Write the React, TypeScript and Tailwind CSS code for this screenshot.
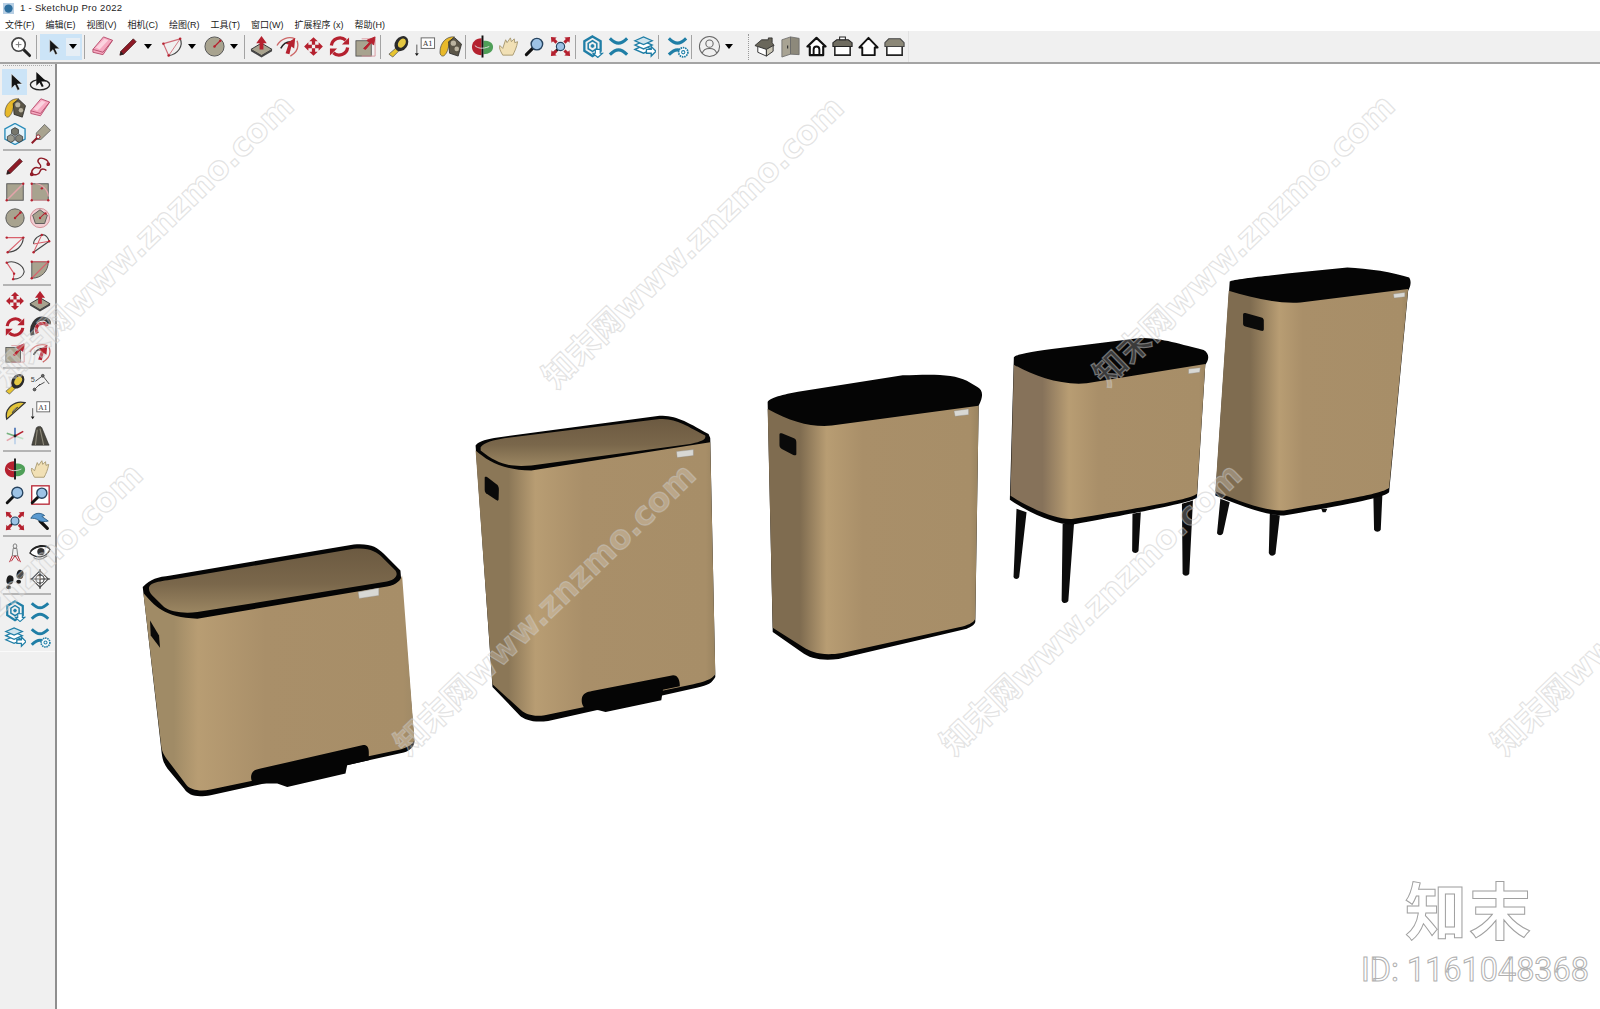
import React from "react";

const R = "#b5212f";
const DR = "#8e1a26";
const B = "#1f7ea6";
const FACE = "#a8a38f";

const dot = (x: number, y: number, k?: number) => <circle key={`${x}-${y}-${k ?? 0}`} cx={x} cy={y} r={1.3} fill={R} />;
const arrows4 = (
  <g fill={R} transform="translate(1.800 1.800) scale(.85)">
    <path d="M12 .5l5.200 5.200h-3.200v4.300h-4V5.700H6.800zM12 23.500l5.200-5.200h-3.200V14h-4v4.300H6.800zM.5 12l5.200-5.200v3.200H10v4H5.700v3.200zM23.500 12l-5.200-5.200v3.200H14v4h4.300v3.200z" />
  </g>
);
const lens = (x = 14.5, y = 9.5, r = 6, fill = "#9dc3e6") => (
  <g>
    <path d={`M${x - r * 0.7} ${y + r * 0.7}L3.500 20.500`} stroke="#111" strokeWidth="3.200" strokeLinecap="round" />
    <circle cx={x} cy={y} r={r} fill={fill} stroke="#26435f" strokeWidth="1.500" />
  </g>
);
const chevrons = (
  <g fill="none" stroke={B} strokeWidth="3.200">
    <path d="M3 3.500C7 7.500 9 8.500 12 8.500s5-1 9-5" />
    <path d="M3 20.500C7 16.500 9 15.500 12 15.500s5 1 9 5" />
  </g>
);
const gear = (x: number, y: number) => (
  <g fill="#fff" stroke={B} strokeWidth="1.100">
    <circle cx={x} cy={y} r={4.800} strokeDasharray="1.600 0.800" strokeWidth="1.800" />
    <circle cx={x} cy={y} r={1.700} />
  </g>
);
const corner = <path d="M2 2L8 2.600 6.400 4.200 9 6.800 6.800 9 4.200 6.400 2.600 8Z" fill={R} />;

const ICONS: Record<string, React.ReactNode> = {
  search: (
    <g>
      <path d="M15 15l6.500 6.500" stroke="#222" strokeWidth="3" strokeLinecap="round" />
      <circle cx="10" cy="10" r="7" fill="#fff" stroke="#444" strokeWidth="1.600" />
      <path d="M10 7v6M7 10h6" stroke="#777" strokeWidth="1" />
    </g>
  ),
  select: <path d="M8 3v16l4-3.800 2.800 6 2.600-1.200-2.800-5.800H20z" fill="#151515" stroke="#fff" strokeWidth=".6" />,
  eraser: (
    <g stroke="#b8506f" strokeWidth="1">
      <path d="M2 15L13 2l9.500 3.500-10 15L2 18z" fill="#f6a9c1" />
      <path d="M2 15l10.500 3 10-12.500" fill="none" />
      <path d="M5 13l9-9 4 1.500-9 9.500z" fill="#fbd3df" stroke="none" />
    </g>
  ),
  pencil: (
    <g>
      <path d="M4 17L17 4l3 3L7 20l-4 1z" fill={DR} stroke="#4a1a1e" strokeWidth=".8" />
      <path d="M3 21l1-4 3 3z" fill="#222" />
    </g>
  ),
  arcPie: (
    <g fill="none">
      <path d="M8 21.500L2.500 9 20 4" stroke="#cf6a76" strokeWidth="1.200" />
      <path d="M20 4c3.500 7-2 16-12 17.500" stroke="#444" strokeWidth="1.200" />
      <path d="M8 21.500L20 4" stroke="#cf6a76" strokeWidth=".9" />
      {dot(8, 21.500)}{dot(2.500, 9)}{dot(20, 4)}
    </g>
  ),
  circle: (
    <g>
      <circle cx="12" cy="12" r="10" fill={FACE} stroke="#555" strokeWidth="1" />
      <path d="M12 12l6-6" stroke={R} strokeWidth="1.200" />
      {dot(12, 12)}{dot(18, 6)}
    </g>
  ),
  polygon: (
    <g>
      <circle cx="12" cy="12" r="10.500" fill="#f1cdd1" stroke="#cf8a92" strokeWidth="1" />
      <path d="M12 3l8 6-3 9H7L4 9z" fill={FACE} stroke="#555" strokeWidth="1" />
      <path d="M12 12l5-5" stroke={R} strokeWidth="1.100" />
      {dot(12, 12)}{dot(18, 7)}
    </g>
  ),
  pushpull: (
    <g>
      <path d="M1 15l11-6.500L23 15l-11 6.500z" fill={FACE} stroke="#333" strokeWidth="1" />
      <path d="M1 15v2l11 6.500L23 17v-2l-11 6.500z" fill="#444" />
      <path d="M12 1l5.500 7.500h-3.500V15h-4V8.500H6.500z" fill={R} />
    </g>
  ),
  followme: (
    <g fill="none">
      <path d="M1 11C5 4 13 1 20 4" stroke="#c66" strokeWidth="1.400" />
      <path d="M15 22c7-4 9-10 7-16" stroke="#c66" strokeWidth="1.400" />
      <path d="M5 14c2-4 6-7 10-7" stroke="#222" strokeWidth="1.600" />
      <path d="M10 19l3-9-3-1 10-6-1 11-3-2-2 8z" fill={R} />
    </g>
  ),
  move: arrows4,
  rotate: (
    <g fill="none" stroke={R} strokeWidth="3.400">
      <path d="M3.500 11a9 9 0 0 1 15-5.500" />
      <path d="M20.500 13a9 9 0 0 1-15 5.500" />
      <path d="M22 2.500V10h-7.500z" fill={R} stroke="none" />
      <path d="M2 21.500V14h7.500z" fill={R} stroke="none" />
    </g>
  ),
  scale: (
    <g>
      <rect x="2" y="6" width="16" height="16" fill={FACE} stroke="#444" strokeWidth=".8" />
      <path d="M8 4h14v18H8" fill="none" stroke="#d99aa0" strokeWidth="1" />
      <path d="M10 14l6-6-2.500-2.500L22 2l-1.500 8.500L18 8l-6 7z" fill={R} stroke={R} />
    </g>
  ),
  tape: (
    <g>
      <path d="M2 20l8-7 3 3-7 7z" fill="#e8c530" stroke="#555" strokeWidth=".8" />
      <ellipse cx="15" cy="9" rx="6.500" ry="8.500" transform="rotate(35 15 9)" fill="#2b2b2b" />
      <ellipse cx="15.500" cy="8.500" rx="3.600" ry="5.200" transform="rotate(35 15.500 8.500)" fill="#e4c843" />
    </g>
  ),
  text: (
    <g>
      <rect x="8.500" y="3" width="14" height="11" fill="#fff" stroke="#666" strokeWidth="1" />
      <text x="15.500" y="11.500" fontSize="7.500" textAnchor="middle" fontFamily="'DejaVu Serif',serif" fill="#333">A1</text>
      <path d="M4 10v9" stroke="#555" strokeWidth="1" />
      <path d="M2 19h4l-2 3z" fill="#111" />
    </g>
  ),
  paint: (
    <g>
      <path d="M1 18C1 8 8 1 16 2c-3 2-5 6-6 10-1 6-4 10-6 10-2 0-3-2-3-4z" fill="#e8b92a" stroke="#444" strokeWidth=".7" />
      <path d="M10 7l6-4.500 7.500 7L20 22l-9-3z" fill="#5b5648" stroke="#222" strokeWidth=".8" />
      <circle cx="15" cy="8.500" r="2.800" fill="#bbb4a0" />
      <circle cx="18.500" cy="14.500" r="2.400" fill="#bbb4a0" />
    </g>
  ),
  orbitColor: (
    <g>
      <path d="M11 3.500C4.500 3.500 1 8 1 12.500S4.500 21 11 21z" fill={R} />
      <path d="M13 6c6 0 10 2 10 6.500s-4 7.500-10 7.500z" fill="#4f9f58" />
      <path d="M12 .5v23" stroke="#111" strokeWidth="2" />
      <path d="M4 11c3 3 8 4 15 1" fill="none" stroke="#ddd" strokeWidth="1" />
    </g>
  ),
  pan: (
    <path d="M6 21C3 16 2 13 3 11l3 3 3-9 1.500 3L14 3l1 4 3-3 .5 4 3-1c-1 6-3 10-5 14z" fill="#f1e0b5" stroke="#a89a72" strokeWidth="1" />
  ),
  zoom: lens(),
  zoomWindow: (
    <g>
      <rect x="3" y="2" width="19" height="20" fill="#fff" stroke={R} strokeWidth="1.400" />
      {lens(14, 10, 5.500)}
    </g>
  ),
  zoomExt: (
    <g>
      <path d="M9 15l-4 4" stroke="#111" strokeWidth="2.500" />
      <circle cx="12" cy="12" r="4.300" fill="#9dc3e6" stroke="#26435f" strokeWidth="1.200" />
      {corner}
      <g transform="rotate(90 12 12)">{corner}</g>
      <g transform="rotate(180 12 12)">{corner}</g>
      <g transform="rotate(270 12 12)">{corner}</g>
    </g>
  ),
  previous: (
    <g>
      <path d="M12 12l8 8" stroke="#111" strokeWidth="3.500" strokeLinecap="round" />
      <path d="M2 9c3-6 10-7 15-3l-3 1 7 5c-4 1-8 1-11-1-3-2-5-2-8-2z" fill="#5b9ad0" stroke="#2d5f88" />
    </g>
  ),
  warehouse: (
    <g fill="none" stroke={B}>
      <path d="M12 1.500l8.500 5v10L12 22l-8.500-5.500v-10z" strokeWidth="2.400" />
      <path d="M12 6l4.500 2.800v5.500L12 17l-4.500-2.700V8.800z" strokeWidth="1.600" />
      <circle cx="12" cy="11.500" r="1.500" fill={B} />
      <path d="M15 15h5v4h2.500l-5 4.500-5-4.500H15z" fill="#fff" strokeWidth="1.200" />
    </g>
  ),
  chev: chevrons,
  layers: (
    <g stroke={B} strokeWidth="1.400" fill="#fff">
      <path d="M2 15l9-4 9 4-9 4z" />
      <path d="M2 10.500l9-4 9 4-9 4z" />
      <path d="M2 6l9-4 9 4-9 4z" fill="#cfe4ee" />
      <path d="M14 15h5v-3l5 5-5 5v-3h-5z" fill="#fff" />
    </g>
  ),
  chevGear: (
    <g>
      {chevrons}
      {gear(18, 18)}
    </g>
  ),
  profile: (
    <g fill="none" stroke="#666" strokeWidth="1.100">
      <circle cx="12" cy="12" r="10.500" />
      <circle cx="12" cy="9" r="3.800" />
      <path d="M4.500 19c1-4 4-5 7.500-5s6.500 1 7.500 5" />
    </g>
  ),
  iso: (
    <g>
      <path d="M2 11L9 5h7V3h4v5l2 3-8 5z" fill="#6a675b" stroke="#222" strokeWidth=".8" />
      <path d="M5 12l9 3v7l-9-4z" fill="#fff" stroke="#333" strokeWidth="1" />
      <path d="M14 15l7-4v6l-7 5z" fill="#c9c5b5" stroke="#333" strokeWidth="1" />
    </g>
  ),
  book: (
    <g>
      <path d="M3 5l9-3v18l-9 3z" fill="#a8a393" stroke="#666" strokeWidth=".8" />
      <path d="M12 2l9 1.500v17L12 20z" fill="#8d897b" stroke="#666" strokeWidth=".8" />
      <path d="M9 11v3" stroke="#333" strokeWidth="1.200" />
    </g>
  ),
  front: (
    <g>
      <path d="M12 3L2.500 12H5v9h14v-9h2.500z" fill="#fff" stroke="#111" strokeWidth="2.200" strokeLinejoin="round" />
      <path d="M9 21v-6a3 3 0 0 1 6 0v6" fill="none" stroke="#111" strokeWidth="2" />
    </g>
  ),
  topBox: (
    <g>
      <path d="M4 8h16v13H4z" fill="#fff" stroke="#222" strokeWidth="1.600" />
      <path d="M2 12V8L6 5h12l4 3v4z" fill="#6f6c60" stroke="#222" strokeWidth="1.100" />
      <path d="M9 5V2h6v3z" fill="#fff" stroke="#222" strokeWidth="1.100" />
    </g>
  ),
  house: <path d="M12 3L2.500 13H5.500v8h13v-8h3z" fill="#fff" stroke="#111" strokeWidth="2" strokeLinejoin="round" />,
  sideBox: (
    <g>
      <path d="M4 10h16v11H4z" fill="#fff" stroke="#222" strokeWidth="1.600" />
      <path d="M2 12V8l4-4h12l4 4v4z" fill="#8c8878" stroke="#444" strokeWidth="1.100" />
    </g>
  ),
  orbit: (
    <g>
      <ellipse cx="12" cy="15" rx="10.500" ry="5.500" fill="none" stroke="#222" strokeWidth="1.400" />
      <path d="M8 1v15l3.500-3.500 2.500 5 2-1-2.500-5H19z" fill="#111" />
    </g>
  ),
  component: (
    <g>
      <path d="M12 .5l11 6v11L12 23.500 1 17.500v-11z" fill="#e4f3fa" stroke="#2c8dba" strokeWidth="1.500" />
      <path d="M12 5l3.800 2.200v4.300L12 13.700 8.200 11.500V7.200z" fill="#77776c" stroke="#222" strokeWidth=".7" />
      <path d="M7.500 12.500l3.800 2.200V19l-3.800 2.200L3.700 19v-4.300z" fill="#9a9a8e" stroke="#222" strokeWidth=".7" />
      <path d="M16.500 12.500l3.800 2.200V19l-3.800 2.200-3.800-2.200v-4.300z" fill="#84847a" stroke="#222" strokeWidth=".7" />
    </g>
  ),
  tag: (
    <g>
      <path d="M8 11L17 1.500l6.500 6.500L13 18H8z" fill={FACE} stroke="#555" strokeWidth=".8" />
      <path d="M10 15l-7 7" stroke={DR} strokeWidth="2.200" />
      <circle cx="10" cy="15" r="2" fill="#fff" stroke={DR} />
    </g>
  ),
  freehand: (
    <g fill="none" stroke={DR} strokeWidth="1.500">
      <path d="M3 21C2 15 7 13 10 14s4-2 1-5 0-7 5-5 5 3 5 6" />
      <path d="M3 21c3 1 8 1 9-3s5-3 7-1" />
      {dot(3, 21)}{dot(21, 10)}
    </g>
  ),
  rect: (
    <g>
      <rect x="3" y="3" width="18" height="18" fill={FACE} stroke="#555" />
      <path d="M3 21L21 3" stroke="#e3a4aa" strokeWidth="1.800" />
      {dot(3, 21)}{dot(21, 3)}
    </g>
  ),
  rectRot: (
    <g>
      <rect x="3" y="3" width="18" height="18" fill={FACE} stroke="#555" />
      <path d="M3 3v18h18M7 3c7 0 14 7 14 14" fill="none" stroke="#e3a4aa" strokeWidth="1.300" />
      {dot(3, 3)}{dot(3, 21)}{dot(21, 21)}{dot(14, 8)}
    </g>
  ),
  arc1: (
    <g fill="none">
      <path d="M3 5h18L4 21" stroke="#d9616c" strokeWidth="1.200" />
      <path d="M21 5c0 9-8 16-17 16" stroke="#444" strokeWidth="1.200" />
      {dot(3, 5)}{dot(21, 5)}{dot(4, 21)}
    </g>
  ),
  arc2: (
    <g fill="none">
      <path d="M5 12c0-6 6-10 11-10 4 1 5 4 6 7L5 21" stroke="#444" strokeWidth="1.200" />
      <path d="M5 21l9-19M5 12l17-3" stroke="#d9616c" strokeWidth="1.100" />
      {dot(5, 21)}{dot(22, 9)}{dot(14, 2)}
    </g>
  ),
  arc3: (
    <g fill="none">
      <path d="M3 4c8-3 18 2 19 10-1 5-6 8-12 8" stroke="#444" strokeWidth="1.200" />
      <path d="M3 4l8 12M11 16l-1 6" stroke="#d9616c" strokeWidth="1.200" />
      {dot(3, 4)}{dot(11, 16)}{dot(10, 22)}
    </g>
  ),
  pie: (
    <g>
      <path d="M3 3h18c0 10-7 18-18 18z" fill={FACE} stroke="#555" />
      <path d="M3 21L21 3M3 3h18" stroke="#d9616c" strokeWidth="1.200" />
      {dot(3, 21)}{dot(21, 3)}{dot(3, 3)}
    </g>
  ),
  offset: (
    <g fill="none">
      <path d="M4 21C1 11 8 2 16 3c4 .5 6 3 6 6" stroke="#333" strokeWidth="4.500" />
      <path d="M9 19C6 12 10 8 15 8c3 0 4 1 5 3" stroke={R} strokeWidth="3.500" />
      <path d="M11 14c1-2 3-2 5-2" stroke="#eee" strokeWidth="1.200" />
    </g>
  ),
  protractor: (
    <g>
      <path d="M3 22C0 10 12 1 23 4z" fill="#e3c53a" stroke="#333" strokeWidth="1.400" />
      <path d="M9 15c1-3 3-5 6-6z" fill="#fff" stroke="#333" strokeWidth=".8" />
    </g>
  ),
  dimension: (
    <g fill="none" stroke="#444" strokeWidth="1">
      <path d="M7 9L15 3M6 18l6-6M15 3l7 9M10 14l7-4" />
      <circle cx="6" cy="18" r="1.500" fill="#666" />
      <circle cx="15" cy="3" r="1.500" fill="#666" />
      <text x="2" y="10" fontSize="8" fill="#444" stroke="none" fontFamily="'Liberation Sans',sans-serif">5</text>
    </g>
  ),
  axes: (
    <g strokeWidth="1.700" fill="none">
      <path d="M12 12V3" stroke="#3a68b0" />
      <path d="M12 12v9" stroke="#b8cfe8" />
      <path d="M12 12L3 9" stroke="#75b27d" />
      <path d="M12 12l9 3" stroke="#c0e0c5" />
      <path d="M12 12L3 17" stroke="#e4a4aa" />
      <path d="M12 12l9-5" stroke={R} />
      <circle cx="12" cy="12" r="1.600" fill="#222" />
    </g>
  ),
  text3d: (
    <g>
      <path d="M3 22L8 3c2-2 5-2 6 0l7 17 1 2z" fill="#4a483f" stroke="#222" strokeWidth=".6" />
      <path d="M9 5L7 22M12 4l4 18" stroke="#8d897a" strokeWidth="1.200" />
    </g>
  ),
  position: (
    <g fill="none" stroke="#777" strokeWidth="1">
      <ellipse cx="12" cy="4.500" rx="2" ry="2.500" />
      <path d="M10 7h4l1 8h-6z" />
      <path d="M9 15l-3 7M15 15l3 7M12 15l-4 6M12 15l4 6" stroke={R} strokeWidth="1" />
    </g>
  ),
  eye: (
    <g>
      <path d="M1 12C5 4 17 2 23 8c-4 9-14 11-22 4z" fill="#fff" stroke="#222" strokeWidth="1.400" />
      <path d="M1 10C6 3 16 1 23 6c-6-1-13-1-17 2z" fill="#222" />
      <circle cx="13" cy="10.500" r="4" fill="#333" />
      <path d="M5 17c5 3 10 2 15-2" fill="none" stroke="#666" strokeWidth="1.100" />
    </g>
  ),
  steps: (
    <g fill="#1c1c1c">
      <ellipse cx="6.500" cy="13" rx="3.800" ry="5" transform="rotate(12 6.500 13)" />
      <ellipse cx="5" cy="21" rx="2.600" ry="2.200" />
      <ellipse cx="17.500" cy="7" rx="3.800" ry="5" transform="rotate(12 17.500 7)" />
      <ellipse cx="16" cy="15" rx="2.600" ry="2.200" />
    </g>
  ),
  section: (
    <g fill="none" stroke="#333" strokeWidth="1.100">
      <path d="M12 3l9 9-9 9-9-9z" fill="#fff" />
      <circle cx="12" cy="12" r="4.500" />
      <path d="M12 1v22M1 12h22" />
    </g>
  ),
};

function Ico({ n, s = 23 }: { n: string; s?: number }) {
  return (
    <svg viewBox="0 0 24 24" width={s} height={s} className="block shrink-0">
      {ICONS[n]}
    </svg>
  );
}

function Cell({ n }: { n: string }) {
  return (
    <div className="w-[26px] h-[26px] flex items-center justify-center shrink-0">
      <Ico n={n} />
    </div>
  );
}

function Caret() {
  return (
    <div className="w-[14px] h-[26px] flex items-center justify-center shrink-0">
      <div className="w-0 h-0 border-l-[4.5px] border-r-[4.5px] border-t-[5px] border-l-transparent border-r-transparent border-t-black" />
    </div>
  );
}

function VSep({ className }: { className: string }) {
  return <div className={`w-px h-[24px] bg-[#a3a3a3] shrink-0 ${className}`} />;
}

function HSep() {
  return <div className="h-[2px] w-[48px] ml-[3px] bg-[#b4b4b4] my-[1px] shrink-0" />;
}

function SideGroup({ items, className }: { items: string[]; className: string }) {
  return (
    <div className={`grid grid-cols-[25px_25px] auto-rows-[26px] ml-[2px] ${className}`}>
      {items.map((n, i) => (
        <div key={i} className={`flex items-center justify-center ${n === "select" ? "bg-[#cce4f7]" : ""}`}>
          <Ico n={n} s={22} />
        </div>
      ))}
    </div>
  );
}

const MENU = ["文件(F)", "编辑(E)", "视图(V)", "相机(C)", "绘图(R)", "工具(T)", "窗口(W)", "扩展程序 (x)", "帮助(H)"];

function TopToolbar() {
  return (
    <div className="h-[31px] bg-[#f0f0f0] border-b-2 border-[#a4a4a4] box-content flex items-center pl-[7px] shrink-0">
      <Cell n="search" />
      <VSep className="ml-[3px]" />
      <div className="ml-[3px] w-[42px] h-[26px] bg-[#cce4f7] flex items-center shrink-0">
        <div className="w-[26px] flex justify-center">
          <Ico n="select" s={20} />
        </div>
        <div className="w-[14px] h-[18px] bg-[#e6eef5] flex items-center justify-center">
          <div className="w-0 h-0 border-l-[4.5px] border-r-[4.5px] border-t-[5px] border-l-transparent border-r-transparent border-t-black" />
        </div>
      </div>
      <VSep className="ml-[2px]" />
      <div className="w-[4px] shrink-0" />
      <Cell n="eraser" />
      <Cell n="pencil" />
      <Caret />
      <div className="w-[4px] shrink-0" />
      <Cell n="arcPie" />
      <Caret />
      <div className="w-[2px] shrink-0" />
      <Cell n="circle" />
      <Caret />
      <VSep className="ml-[3px]" />
      <div className="w-[3px] shrink-0" />
      <Cell n="pushpull" />
      <Cell n="followme" />
      <Cell n="move" />
      <Cell n="rotate" />
      <Cell n="scale" />
      <VSep className="ml-[2px]" />
      <div className="w-[4px] shrink-0" />
      <Cell n="tape" />
      <Cell n="text" />
      <Cell n="paint" />
      <VSep className="ml-[2px]" />
      <div className="w-[3px] shrink-0" />
      <Cell n="orbitColor" />
      <Cell n="pan" />
      <Cell n="zoom" />
      <Cell n="zoomExt" />
      <VSep className="ml-[2px]" />
      <div className="w-[3px] shrink-0" />
      <Cell n="warehouse" />
      <Cell n="chev" />
      <Cell n="layers" />
      <VSep className="ml-px" />
      <div className="w-[5px] shrink-0" />
      <Cell n="chevGear" />
      <VSep className="ml-px" />
      <div className="w-[4px] shrink-0" />
      <Cell n="profile" />
      <Caret />
      <div className="ml-[12px] w-px h-[26px] border-l border-dotted border-[#999] shrink-0" />
      <div className="w-[2px] shrink-0" />
      <Cell n="iso" />
      <Cell n="book" />
      <Cell n="front" />
      <Cell n="topBox" />
      <Cell n="house" />
      <Cell n="sideBox" />
      <div className="ml-px w-px h-[31px] bg-[#e2e2e2] shrink-0" />
    </div>
  );
}

function SideToolbar() {
  return (
    <div className="w-[57px] shrink-0 bg-[#f0f0f0] border-r-2 border-[#8f8f8f] flex flex-col">
      <div className="h-[4px] mx-[3px] mt-px border-t border-dotted border-[#aaa] shrink-0" />
      <SideGroup className="mb-[1px]" items={["select", "orbit", "paint", "eraser", "component", "tag"]} />
      <HSep />
      <SideGroup className="mt-[1px]" items={["pencil", "freehand", "rect", "rectRot", "circle", "polygon", "arc1", "arc2", "arc3", "pie"]} />
      <HSep />
      <SideGroup className="mt-[1px]" items={["move", "pushpull", "rotate", "offset", "scale", "followme"]} />
      <HSep />
      <SideGroup className="mt-[1px]" items={["tape", "dimension", "protractor", "text", "axes", "text3d"]} />
      <HSep />
      <SideGroup className="mt-[3px]" items={["orbitColor", "pan", "zoom", "zoomWindow", "zoomExt", "previous"]} />
      <HSep />
      <SideGroup className="mt-[2px]" items={["position", "eye", "steps", "section"]} />
      <HSep />
      <SideGroup className="mt-[2px]" items={["warehouse", "chev", "layers", "chevGear"]} />
      <div className="h-px bg-[#fafafa] mt-px" />
    </div>
  );
}

function Grad({ id, x1, x2, l, m, r, ml = 0.25 }: { id: string; x1: number; x2: number; l: string; m: string; r: string; ml?: number }) {
  return (
    <linearGradient id={id} gradientUnits="userSpaceOnUse" x1={x1} x2={x2} y1="0" y2="0">
      <stop offset="0" stopColor={l} />
      <stop offset={ml * 0.55} stopColor={l} />
      <stop offset={ml} stopColor={m} />
      <stop offset="0.45" stopColor="#a98f69" />
      <stop offset="0.96" stopColor="#a78e68" />
      <stop offset="1" stopColor={r} />
    </linearGradient>
  );
}

const Z1 = "translate(120 520) scale(.3333)";
const Z2 = "translate(460 400) scale(.338 .3333)";
const Z3 = "translate(1000 260) scale(.3345 .3333)";

function Bins() {
  return (
    <svg viewBox="57 63 1543 946" className="block w-full h-full">
      <defs>
        <Grad id="g1" x1={70} x2={880} l="#a08b66" m="#b89d73" r="#a08a66" ml={0.2} />
        <Grad id="g2" x1={45} x2={755} l="#8b7757" m="#b89d73" r="#9a8460" ml={0.25} />
        <Grad id="g3" x1={910} x2={1535} l="#7f6c50" m="#b89d73" r="#9a8460" ml={0.28} />
        <Grad id="g4" x1={30} x2={620} l="#86725a" m="#b89d73" r="#9a8460" ml={0.3} />
        <Grad id="g5" x1={645} x2={1225} l="#7f6c50" m="#b89d73" r="#9a8460" ml={0.33} />
        <linearGradient id="lid1" x1="0" x2="0" y1="0" y2="1">
          <stop offset="0" stopColor="#6c5a41" />
          <stop offset="0.55" stopColor="#7a674b" />
          <stop offset="1" stopColor="#9b8662" />
        </linearGradient>
      </defs>

      <g transform={Z1}>
        <path d="M66 200C90 175 110 170 150 165L700 72C750 68 770 80 790 100L840 150L882 665C880 680 870 690 850 697L270 825C230 832 205 828 190 805L140 745C130 730 125 720 122 690Z" fill="#050505" />
        <path d="M68 218C100 255 130 292 230 295L800 198C830 192 840 180 845 165L882 660C878 672 860 682 840 688L270 808C235 815 210 808 198 795L145 725C135 712 125 700 122 680Z" fill="url(#g1)" />
        <path d="M85 205C85 190 100 185 150 178L700 85C745 80 770 95 785 110L825 150C835 165 825 180 790 185L230 275C190 280 150 275 130 260L95 225C88 218 85 212 85 205Z" fill="url(#lid1)" />
        <path d="M713 215L775 203L775 225L716 234Z" fill="#d8d8d4" stroke="#8a8a8a" strokeWidth="1" />
        <path d="M88 300L115 345L118 382L90 345Z" fill="#0a0a0a" />
        <path d="M392 765C395 752 405 748 420 745L725 675C738 672 745 680 745 695L745 720L680 735L675 760L500 800L470 790L400 790C393 785 390 775 392 765Z" fill="#050505" />
      </g>

      <g transform={Z2}>
        <path d="M45 135C50 125 70 117 100 112L590 45C640 45 665 60 735 100L740 112L755 830C745 848 735 855 700 862L260 962C220 968 190 960 175 945L95 860Z" fill="#050505" />
        <path d="M45 150C80 180 120 208 210 210L740 125L755 822C745 838 720 845 690 852L250 945C215 950 195 942 180 930L95 852Z" fill="url(#g2)" />
        <path d="M60 140C70 125 100 118 130 113L590 55C640 55 660 70 725 105C730 120 700 125 680 130L210 195C140 200 110 190 60 150Z" fill="url(#lid1)" />
        <path d="M640 153L690 147L690 165L642 171Z" fill="#d8d8d4" stroke="#8a8a8a" strokeWidth="1" />
        <path d="M72 232C72 228 75 228 80 230L108 252C113 256 114 262 114 268L113 298C112 302 108 300 105 298L76 278C72 275 72 270 72 265Z" fill="#0a0a0a" />
        <path d="M360 892C365 878 375 875 390 872L630 825C645 825 650 840 650 858L600 868L595 900L430 935L410 930L370 925C360 915 358 905 360 892Z" fill="#050505" />
      </g>

      <g transform={Z2}>
        <path d="M910 5C912 -8 960 -20 1000 -27L1310 -76C1400 -80 1460 -80 1500 -60L1530 -42C1548 -32 1550 -15 1535 15L1525 665C1522 675 1510 680 1500 685L1120 776C1070 782 1035 775 1010 755L925 695Z" fill="#050505" />
        <path d="M910 25C980 65 1040 80 1100 75L1535 15L1525 655C1520 668 1500 675 1480 680L1130 758C1070 768 1040 755 1015 740L925 682Z" fill="url(#g3)" />
        <path d="M1462 31L1505 25L1505 42L1465 47Z" fill="#d8d8d4" stroke="#8a8a8a" strokeWidth="1" />
        <path d="M945 102C945 98 948 97 952 98L988 113C994 116 995 120 995 126L995 160C995 165 990 165 986 163L952 145C946 142 945 138 945 132Z" fill="#0a0a0a" />
      </g>

      <g transform={Z3}>
        <path d="M50 745L80 755L58 950C55 958 44 958 41 950ZM188 790L222 790L205 1022C200 1030 188 1030 185 1020ZM397 760L422 755L415 872C411 880 400 880 396 872ZM545 730L578 720L567 940C563 948 551 948 547 940Z" fill="#0c0c0c" />
        <path d="M42 290C50 280 100 272 180 262L420 232C480 232 520 245 610 268C630 280 625 300 615 312L590 712C570 725 500 740 220 792C180 795 100 765 30 718Z" fill="#050505" />
        <path d="M42 312C100 345 180 375 260 368L615 310L590 700C570 715 500 730 220 775C180 780 100 750 32 706Z" fill="url(#g4)" />
        <path d="M565 325L600 321L598 335L565 339Z" fill="#d8d8d4" stroke="#8a8a8a" strokeWidth="1" />
      </g>

      <g transform={Z3}>
        <path d="M660 715L688 725L668 818C664 826 654 826 650 818ZM808 760L838 765L825 880C820 888 808 888 805 878ZM1118 710L1145 700L1140 808C1136 816 1124 816 1120 808ZM962 745L980 745L975 755L966 755Z" fill="#0c0c0c" />
        <path d="M688 62C700 55 800 45 860 38L1040 20C1100 22 1180 35 1225 50C1235 65 1225 85 1222 90L1165 695C1150 708 1100 722 850 765C800 765 730 740 645 705Z" fill="#050505" />
        <path d="M685 90C750 110 830 130 900 125L1222 85L1165 682C1150 695 1100 708 850 750C800 752 730 728 645 692Z" fill="url(#g5)" />
        <path d="M1178 100L1212 95L1212 108L1180 112Z" fill="#d8d8d4" stroke="#8a8a8a" strokeWidth="1" />
        <path d="M728 162C728 158 731 157 735 157L783 170C789 172 790 176 790 180L790 205C790 211 786 211 782 210L735 197C729 195 728 192 728 188Z" fill="#0a0a0a" />
      </g>
    </svg>
  );
}

const WM: [number, number][] = [
  [6, 388],
  [556, 390],
  [1107, 388],
  [-145, 757],
  [408, 757],
  [954, 757],
  [1505, 757],
];

function Overlay() {
  return (
    <svg viewBox="0 0 1600 1009" className="absolute inset-0 w-full h-full pointer-events-none">
      {WM.map(([x, y], i) => (
        <text
          key={i}
          transform={`translate(${x} ${y}) rotate(-44)`}
          fontFamily="'DejaVu Sans','Noto Sans CJK SC',sans-serif"
          fontSize="32.5"
          fontWeight="700"
          fill="rgba(255,255,255,.22)"
          stroke="rgba(200,200,200,.5)"
          strokeWidth="1.200"
        >
          知末网www.znzmo.com
        </text>
      ))}
      <text
        x="1405"
        y="935"
        fontFamily="'Noto Sans CJK SC',sans-serif"
        fontSize="62"
        fontWeight="700"
        letterSpacing="2"
        fill="#fff"
        stroke="#a0a0a0"
        strokeWidth="1"
      >
        知末
      </text>
      <text
        x="1361"
        y="981"
        fontFamily="'Roboto','Liberation Sans',sans-serif"
        fontSize="32.400"
        fill="#fff"
        stroke="#b0b0b0"
        strokeWidth="1"
      >
        ID: 1161048368
      </text>
    </svg>
  );
}

export default function App() {
  return (
    <div className="relative w-[1600px] h-[1009px] overflow-hidden bg-white flex flex-col font-['Liberation_Sans','Noto_Sans_CJK_SC',sans-serif] text-[#222]">
      <div className="h-[17px] flex items-center pl-[3px] gap-[6px] text-[9.5px] tracking-[0.3px] bg-white shrink-0">
        <svg viewBox="0 0 12 12" width="11" height="11" className="block">
          <rect width="12" height="12" fill="#b8cfe4" />
          <circle cx="6" cy="6" r="4.500" fill="#2e6f9e" />
        </svg>
        <span>1 - SketchUp Pro 2022</span>
      </div>
      <div className="h-[14px] flex items-center pl-[5px] pt-[3px] text-[9px] bg-white shrink-0 text-[#222]">
        {MENU.map((m) => (
          <span key={m} className="mr-[11px] whitespace-nowrap">
            {m}
          </span>
        ))}
      </div>
      <TopToolbar />
      <div className="flex flex-1 min-h-0">
        <SideToolbar />
        <div className="flex-1 min-w-0 bg-white">
          <Bins />
        </div>
      </div>
      <Overlay />
    </div>
  );
}
